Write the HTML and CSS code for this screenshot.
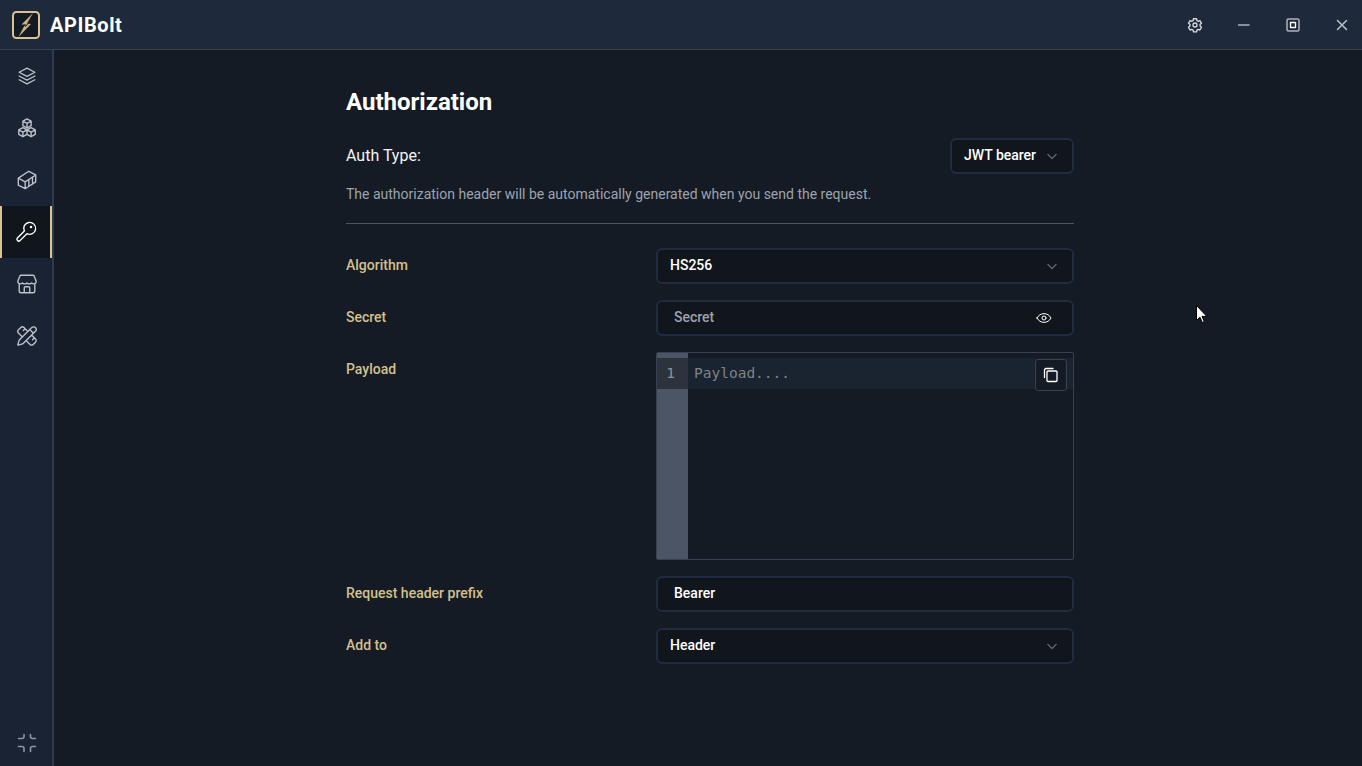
FILE: index.html
```html
<!DOCTYPE html>
<html lang="en">
<head>
<meta charset="utf-8">
<title>APIBolt</title>
<link rel="stylesheet" href="styles.css">
</head>
<body>
<header class="titlebar">
  <div class="brand">
    <svg class="logo" viewBox="0 0 28 28" width="28" height="28"><rect x="1" y="1" width="26" height="26" rx="3.500" fill="#141a24" stroke="#d9c291" stroke-width="2"/><path d="M21 2 L9.500 13.500 L13 13.500 L6.500 26 L19 13 L15 12.500 Z" fill="#c8b283"/><path d="M10 17 L13 13.500 L13.500 15.500 L16.500 12" stroke="#141a24" stroke-width="1" fill="none"/></svg>
    <span class="brand-name">APIBolt</span>
  </div>
  <div class="winbtns">
    <button class="winbtn"><svg viewBox="0 0 24 24" width="16" height="16" class="ic gear"><path d="M9.700 2.600h4.600l.6 2.800 1.800 1 2.700-.9 2.300 4-2.100 1.900v2.200l2.100 1.900-2.300 4-2.700-.9-1.800 1-.6 2.800H9.700l-.6-2.800-1.800-1-2.700.9-2.300-4 2.100-1.900v-2.200L2.300 9.500l2.300-4 2.700.9 1.800-1z"/><circle cx="12" cy="12" r="3"/></svg></button>
    <button class="winbtn"><svg viewBox="0 0 16 16" width="16" height="16" class="ic dim"><path d="M2.500 8h10.500"/></svg></button>
    <button class="winbtn"><svg viewBox="0 0 16 16" width="16" height="16" class="ic dim"><rect x="2" y="2" width="12" height="12" rx="1.500"/><rect x="5.500" y="5.500" width="5" height="5" class="bright thin"/></svg></button>
    <button class="winbtn"><svg viewBox="0 0 16 16" width="16" height="16" class="ic"><path d="M3.500 3.500l9 9M12.500 3.500l-9 9"/></svg></button>
  </div>
</header>
<div class="app">
  <nav class="sidebar">
    <a class="navitem"><svg viewBox="0 0 24 24" width="20" height="20" class="ic"><path d="M12 2.500l9.500 5-9.500 5-9.500-5zM2.500 12l9.500 5 9.500-5M2.500 16.500l9.500 5 9.500-5"/></svg></a>
    <a class="navitem"><svg viewBox="0 0 24 24" width="22" height="22" class="ic"><path d="M12 2l4.500 2.500v5L12 12 7.500 9.500v-5zM7.500 4.500L12 7l4.500-2.500M12 7v5M7.500 11.500L12 14v5l-4.500 2.500L3 19v-5zM3 14l4.500 2.500L12 14M7.500 16.500v5M16.500 11.500L21 14v5l-4.500 2.500L12 19v-5zM12 14l4.500 2.500L21 14M16.500 16.500v5"/></svg></a>
    <a class="navitem"><svg viewBox="0 0 24 24" width="22" height="22" class="ic"><path d="M14 2.500L21.500 6.500V14L10 21.500 2.500 17.500V10zM2.500 10L10 14 21.500 6.500M10 14V21.500M14 11.500V19M18 9V16.500"/></svg></a>
    <a class="navitem active"><svg viewBox="0 0 24 24" width="22" height="22" class="ic bright"><path d="M10.210 10.960L2.590 18.590A2 2 0 0 0 5.410 21.410L13.040 13.790A6.500 6.500 0 1 0 10.210 10.960Z"/><circle cx="17.500" cy="6.500" r=".6"/></svg></a>
    <a class="navitem"><svg viewBox="0 0 24 24" width="22" height="22" class="ic"><path d="M5.500 2.500h13a1.500 1.500 0 0 1 1.400 1L22 9a2.500 2.500 0 0 1-2.500 2.800 3.500 3.500 0 0 1-2.500-1 3.500 3.500 0 0 1-5 0 3.500 3.500 0 0 1-5 0 3.500 3.500 0 0 1-2.500 1A2.500 2.500 0 0 1 2 9l2.100-5.500a1.500 1.500 0 0 1 1.400-1zM3.500 12v7.500a2 2 0 0 0 2 2h13a2 2 0 0 0 2-2V12M9 21.500V16a1 1 0 0 1 1-1h4a1 1 0 0 1 1 1v5.500"/></svg></a>
    <a class="navitem"><svg viewBox="0 0 24 24" width="22" height="22" class="ic"><path d="M13 7 8.700 2.700a2.410 2.410 0 0 0-3.400 0L2.700 5.300a2.410 2.410 0 0 0 0 3.400L7 13M8 6l2-2M18 16l2-2M17 11l4.300 4.300c.94.94.94 2.460 0 3.400l-2.600 2.600c-.94.94-2.460.94-3.400 0L11 17M21.174 6.812a1 1 0 0 0-3.986-3.987L3.842 16.174a2 2 0 0 0-.5.830l-1.321 4.352a.5.5 0 0 0 .623.622l4.353-1.320a2 2 0 0 0 .830-.497zM15 5l4 4"/></svg></a>
    <a class="navitem collapse"><svg viewBox="0 0 20 20" width="20" height="20" class="ic dim2"><path d="M7 1.500V3.500a2 2 0 0 1-2 2H1.500M13.500 1.500V3.500a2 2 0 0 0 2 2H18.500M7 18.500V15.500a2 2 0 0 0-2-2H1.500M13.500 18.500V15.500a2 2 0 0 1 2-2H18.500"/></svg></a>
  </nav>
  <main class="content">
    <section class="panel">
      <h1 class="title">Authorization</h1>
      <div class="authtype">
        <span class="authtype-label">Auth Type:</span>
        <div class="field select compact"><span class="val">JWT bearer</span><svg viewBox="0 0 12 12" width="12" height="12" class="chev"><path d="M1.500 4l4.500 4.500L10.500 4"/></svg></div>
      </div>
      <p class="desc">The authorization header will be automatically generated when you send the request.</p>
      <hr class="rule">
      <div class="form">
        <label class="lbl">Algorithm</label>
        <div class="field select"><span class="val">HS256</span><svg viewBox="0 0 12 12" width="12" height="12" class="chev"><path d="M1.500 4l4.500 4.500L10.500 4"/></svg></div>
        <label class="lbl">Secret</label>
        <div class="field text"><span class="val ph">Secret</span><svg viewBox="0 0 24 24" width="16" height="16" class="ic bright eye"><path d="M1.500 12C4 7.500 7.500 5.500 12 5.500s8 2 10.500 6.500c-2.500 4.500-6 6.500-10.500 6.500S4 16.500 1.500 12z"/><circle cx="12" cy="12" r="3"/></svg></div>
        <label class="lbl">Payload</label>
        <div class="editor">
          <div class="gutter"><span class="lineno">1</span></div>
          <div class="code"><div class="activeline">Payload....</div></div>
          <button class="copy"><svg viewBox="0 0 16 16" width="16" height="16" class="ic bright thin"><path d="M1.500 10.500V3A1.500 1.500 0 0 1 3 1.500h7"/><rect x="4" y="4" width="10" height="10.500" rx="1"/></svg></button>
        </div>
        <label class="lbl">Request header prefix</label>
        <div class="field text"><span class="val">Bearer</span></div>
        <label class="lbl">Add to</label>
        <div class="field select"><span class="val">Header</span><svg viewBox="0 0 12 12" width="12" height="12" class="chev"><path d="M1.500 4l4.500 4.500L10.500 4"/></svg></div>
      </div>
    </section>
  </main>
</div>
<svg class="cursor" viewBox="0 0 12 19" width="12" height="19"><path d="M.5.500v15l3.500-3.300 2.300 5.300 2-.9-2.300-5.200h4.800z" fill="#fff" stroke="#000" stroke-width="1"/></svg>
</body>
</html>
```
FILE: styles.css
```css
* { box-sizing: border-box; }
html, body { margin: 0; height: 100%; }
body {
  background: #151b24;
  color: #fff;
  font-family: Roboto, "Liberation Sans", sans-serif;
  font-size: 14px;
  overflow: hidden;
  display: flex;
  flex-direction: column;
  height: 766px;
}
svg { display: block; }
.ic { fill: none; stroke: #bcc1ca; stroke-width: 1.5; stroke-linecap: round; stroke-linejoin: round; }
.ic.bright, .ic .bright { stroke: #fff; }
.ic.thin, .ic .thin { stroke-width: 1.300; }
.ic.gear { stroke: #d8dbe0; stroke-width: 2; }
.ic.dim { stroke: #aeb3bc; }
.ic.dim2 { stroke: #8f95a0; stroke-width: 1.600; }

.titlebar {
  height: 50px;
  flex: none;
  display: flex;
  align-items: center;
  justify-content: space-between;
  background: #1e293b;
  border-bottom: 1px solid #374151;
}
.brand { display: flex; align-items: center; gap: 10px; padding-left: 12px; }
.brand-name { font-size: 20px; font-weight: 700; letter-spacing: 0.6px; }
.winbtns { display: flex; gap: 9px; }
.winbtn {
  width: 40px;
  height: 49px;
  background: none;
  border: 0;
  padding: 0;
  display: flex;
  align-items: center;
  justify-content: center;
}

.app { flex: 1; display: flex; min-height: 0; }
.sidebar {
  width: 54px;
  flex: none;
  display: flex;
  flex-direction: column;
  background: #1a2333;
  border-right: 2px solid #2d3a50;
}
.navitem { height: 52px; display: flex; align-items: center; justify-content: center; padding-left: 1px; }
.navitem.active {
  background: #11151c;
  border-left: 2px solid #dcc48e;
  border-right: 2px solid #dcc48e;
  padding-left: 0;
}
.navitem.collapse { margin-top: auto; height: 46px; }

.content { flex: 1; padding: 0 288px 0 292px; }
.panel { width: 728px; padding-top: 36px; }
.title { margin: 0; font-size: 24px; line-height: 32px; font-weight: 700; }
.authtype { display: flex; align-items: center; justify-content: space-between; margin-top: 20px; }
.authtype-label { font-size: 16px; color: #f3f4f6; padding-bottom: 2px; }
.desc { margin: 10px 0 0; font-size: 14px; line-height: 20px; color: #9ca3af; }
.rule { margin: 19px 0 24px; height: 1px; border: 0; background: #4b5563; }

.form {
  display: grid;
  grid-template-columns: 310px 418px;
  grid-auto-rows: auto;
  row-gap: 16px;
}
.lbl {
  font-size: 14px;
  line-height: 20px;
  font-weight: 500;
  color: #d4c08c;
  padding-top: 7px;
}
.field {
  height: 36px;
  display: flex;
  align-items: center;
  justify-content: space-between;
  background: #11151c;
  border: 2px solid #1f2b40;
  border-radius: 6px;
  padding: 0 14px 0 12px;
}
.field.compact { width: 124px; padding-right: 14px; }
.field.text { padding-left: 16px; padding-right: 20px; }
.val { font-size: 14px; font-weight: 500; color: #fff; padding-bottom: 2px; }
.val.ph { color: #9ca3af; }
.chev { fill: none; stroke: #5f6673; stroke-width: 1.300; }

.editor {
  position: relative;
  height: 208px;
  display: flex;
  background: #151b24;
  border: 1px solid #374151;
  border-radius: 2px;
}
.gutter { width: 31px; flex: none; background: #4b5565; padding-top: 5px; }
.lineno {
  display: block;
  height: 31px;
  background: #2d333d;
  color: #8b929c;
  font: 14.500px/31px "DejaVu Sans Mono", monospace;
  text-align: center;
  padding-right: 4px;
}
.code { flex: 1; padding-top: 5px; }
.activeline {
  height: 31px;
  padding-left: 6px;
  background: #1a2330;
  color: #7f8388;
  font: 14.500px/31px "DejaVu Sans Mono", monospace;
}
.copy {
  position: absolute;
  top: 6px;
  right: 6px;
  width: 32px;
  height: 32px;
  display: flex;
  align-items: center;
  justify-content: center;
  background: #151b24;
  border: 1px solid #374151;
  border-radius: 3px;
  padding: 0;
}
.cursor { position: absolute; left: 1196px; top: 305px; }
```
